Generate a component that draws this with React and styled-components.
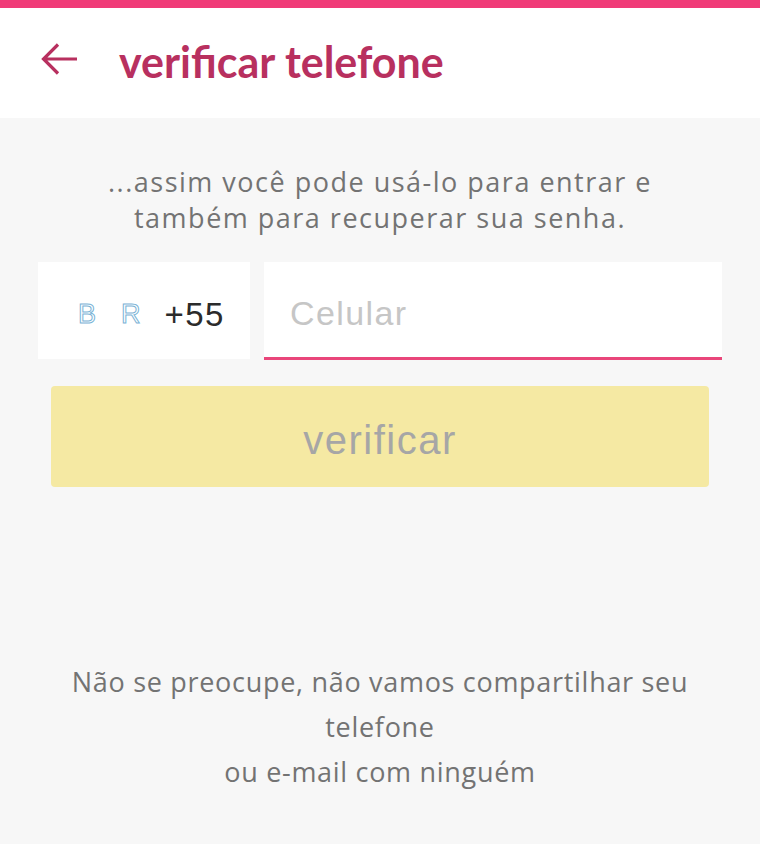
import React from "react";
import styled, { createGlobalStyle } from "styled-components";

const Global = createGlobalStyle`
  html, body { margin: 0; padding: 0; }
  body { background: #f7f7f7; font-family: "Open Sans", sans-serif; }
`;

const Page = styled.div`
  width: 760px;
  height: 844px;
  display: flex;
  flex-direction: column;
  background: #f7f7f7;
  overflow: hidden;
`;

const TopStrip = styled.div`
  height: 8px;
  background: #f03b78;
`;

const Header = styled.header`
  height: 110px;
  background: #ffffff;
  display: flex;
  align-items: center;
  padding-left: 40px;
  gap: 41px;
`;

const BackButton = styled.button`
  border: none;
  background: none;
  padding: 0;
  width: 38px;
  height: 40px;
  display: flex;
  align-items: center;
  justify-content: center;
  margin-top: -8px;
`;

const Title = styled.h1`
  margin: 0;
  font-family: "Lato", sans-serif;
  font-weight: 700;
  font-size: 43px;
  color: #b8305f;
  line-height: 1;
  margin-top: -4px;
`;

const Content = styled.main`
  flex: 1;
  display: flex;
  flex-direction: column;
  align-items: center;
  padding-top: 46px;
`;

const Copy = styled.p`
  margin: 0;
  text-align: center;
  font-family: "Open Sans", sans-serif;
  font-size: 27px;
  color: #737373;
  line-height: ${(p) => p.$lh}px;
  letter-spacing: ${(p) => p.$ls}px;
`;

const Footer = styled(Copy)`
  margin-top: 172px;
`;

const PhoneRow = styled.div`
  width: 684px;
  display: flex;
  gap: 14px;
  margin-top: 26px;
`;

const CountryBox = styled.div`
  flex: 0 0 212px;
  height: 97px;
  background: #ffffff;
  display: flex;
  align-items: center;
  padding: 8px 0 0 40px;
  box-sizing: border-box;
`;

const FlagLetter = styled.span`
  font-family: "Liberation Sans", sans-serif;
  font-size: 27px;
  color: transparent;
  -webkit-text-stroke: 1px #7ab3d6;
  margin-right: ${(p) => p.$gap}px;
`;

const Code = styled.span`
  font-family: "Liberation Sans", sans-serif;
  font-size: 33px;
  letter-spacing: 1.4px;
  color: #2b2b2b;
`;

const PhoneInput = styled.input`
  flex: 1;
  min-width: 0;
  height: 98px;
  box-sizing: border-box;
  border: none;
  border-bottom: 3px solid #e9467a;
  background: #ffffff;
  padding: 8px 26px 0;
  font-family: "Liberation Sans", sans-serif;
  font-size: 34px;
  letter-spacing: 1.4px;
  color: #333;
  outline: none;
  &::placeholder { color: #c6c6c6; }
`;

const VerifyButton = styled.button`
  width: 658px;
  height: 101px;
  margin-top: 26px;
  padding: 8px 0 0;
  border: none;
  border-radius: 4px;
  background: #f5e9a3;
  font-family: "Liberation Sans", sans-serif;
  font-size: 40px;
  letter-spacing: 1.5px;
  color: #a6a6a6;
`;

export default function App() {
  return (
    <>
      <Global />
      <Page>
        <TopStrip />
        <Header>
          <BackButton aria-label="voltar">
            <svg width="38" height="36" viewBox="0 0 38 36" fill="none">
              <path d="M37 18H4M18 3.5L3.5 18L18 32.5" stroke="#b8305f" strokeWidth="3.2" />
            </svg>
          </BackButton>
          <Title>verificar telefone</Title>
        </Header>
        <Content>
          <Copy $lh={36} $ls={1.5}>
            ...assim você pode usá-lo para entrar e
            <br />
            também para recuperar sua senha.
          </Copy>
          <PhoneRow>
            <CountryBox>
              <FlagLetter $gap={25}>B</FlagLetter>
              <FlagLetter $gap={24}>R</FlagLetter>
              <Code>+55</Code>
            </CountryBox>
            <PhoneInput placeholder="Celular" />
          </PhoneRow>
          <VerifyButton>verificar</VerifyButton>
          <Footer $lh={45} $ls={0.7}>
            Não se preocupe, não vamos compartilhar seu
            <br />
            telefone
            <br />
            ou e-mail com ninguém
          </Footer>
        </Content>
      </Page>
    </>
  );
}
